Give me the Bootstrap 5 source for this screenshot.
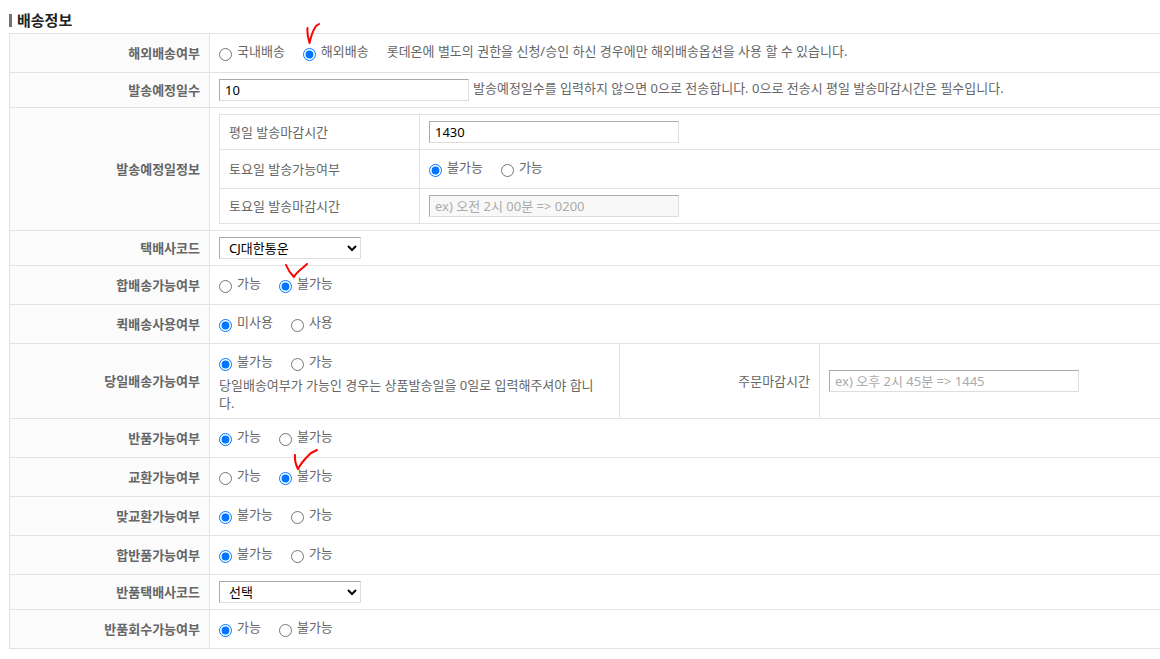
<!DOCTYPE html>
<html lang="ko">
<head>
<meta charset="utf-8">
<meta name="viewport" content="width=device-width, initial-scale=1">
<title>배송정보</title>
<link href="https://cdn.jsdelivr.net/npm/bootstrap@5.3.0/dist/css/bootstrap.min.css" rel="stylesheet">
<style>
  body { font: 13px/18px "Noto Sans", "Noto Sans CJK KR", sans-serif; color: #666; }
  .page { padding: 9px 0 9px 9px; }
  .section-title { font-size: 15px; line-height: 22px; color: #222; gap: 5px; margin-bottom: 2px; }
  .section-title::before { content: ""; width: 3px; height: 13px; background: #6c757d; }
  .form-grid { width: 100%; table-layout: fixed; border-collapse: collapse; }
  .form-grid th, .form-grid td { border: 1px solid #e1e1e6; padding: 6px 9px; vertical-align: middle; }
  .form-grid tr > :last-child { border-right: 0; }
  .form-grid .inner-cell { padding-right: 0; }
  .form-grid th { text-align: right; font-weight: 400; }
  .form-grid .row-head { background: #fbfbfb; font-weight: 700; color: #666; }
  .form-grid .inner-head { text-align: left; }
  .col-label { width: 200px; }
  .col-field { width: 410px; }
  .field, .picker { height: 22px; border: 1px solid #ddd; border-top-color: #aaa; border-left-color: #aaa; background: #fff; color: #000; border-radius: 0; }
  .field { width: 250px; padding: 0 5px; }
  .field::placeholder { color: #aaa; opacity: 1; }
  .field:disabled { background: #f8f8f8; }
  .picker { width: 142px; padding: 0 0 0 5px; }
  .choices { height: 26px; gap: 18px; }
  .choice { position: relative; gap: 5px; }
  .choice input { margin-top: 3px; }
  .choice label, .hint { padding-bottom: 4px; }
  .pen { position: absolute; fill: none; stroke: #f00; stroke-width: 2; stroke-linecap: round; stroke-linejoin: round; pointer-events: none; }
  .pen-a { left: 3px; top: -20px; }
  .pen-b { left: 5px; top: -12px; }
  .pen-c { left: 14px; top: -18px; }
</style>
</head>
<body>
<main class="page">
  <h1 class="section-title d-flex align-items-center fw-bold">배송정보</h1>
  <form>
  <table class="form-grid">
    <colgroup><col class="col-label"><col class="col-field"><col class="col-label"><col></colgroup>
    <tbody>
      <tr>
        <th class="row-head" scope="row">해외배송여부</th>
        <td colspan="3">
          <div class="choices d-flex align-items-center">
            <div class="choice d-flex align-items-center"><input type="radio" name="overseas" id="o1"><label for="o1">국내배송</label></div>
            <div class="choice d-flex align-items-center"><input type="radio" name="overseas" id="o2" checked><label for="o2">해외배송</label>
              <svg class="pen pen-a" width="16" height="24" aria-hidden="true"><path d="M1.500 6C1 11 2 16 3.500 21C5 14 8 7 10 4L13 2"/></svg>
            </div>
            <span class="hint">롯데온에 별도의 권한을 신청/승인 하신 경우에만 해외배송옵션을 사용 할 수 있습니다.</span>
          </div>
        </td>
      </tr>
      <tr>
        <th class="row-head" scope="row"><label for="days">발송예정일수</label></th>
        <td colspan="3">
          <div class="d-flex align-items-center gap-1">
            <input class="field" type="text" id="days" value="10">
            <span class="hint">발송예정일수를 입력하지 않으면 0으로 전송합니다. 0으로 전송시 평일 발송마감시간은 필수입니다.</span>
          </div>
        </td>
      </tr>
      <tr>
        <th class="row-head" scope="row">발송예정일정보</th>
        <td colspan="3" class="inner-cell">
          <table class="form-grid">
            <colgroup><col class="col-label"><col></colgroup>
            <tbody>
              <tr>
                <th class="inner-head" scope="row"><label for="weekday">평일 발송마감시간</label></th>
                <td><input class="field d-block" type="text" id="weekday" value="1430"></td>
              </tr>
              <tr>
                <th class="inner-head" scope="row">토요일 발송가능여부</th>
                <td>
                  <div class="choices d-flex align-items-center">
                    <div class="choice d-flex align-items-center"><input type="radio" name="sat" id="s1" checked><label for="s1">불가능</label></div>
                    <div class="choice d-flex align-items-center"><input type="radio" name="sat" id="s2"><label for="s2">가능</label></div>
                  </div>
                </td>
              </tr>
              <tr>
                <th class="inner-head" scope="row"><label for="satTime">토요일 발송마감시간</label></th>
                <td><input class="field d-block" type="text" id="satTime" placeholder="ex) 오전 2시 00분 =&gt; 0200" disabled></td>
              </tr>
            </tbody>
          </table>
        </td>
      </tr>
      <tr>
        <th class="row-head" scope="row"><label for="courier">택배사코드</label></th>
        <td colspan="3"><select class="picker d-block" id="courier"><option>CJ대한통운</option></select></td>
      </tr>
      <tr>
        <th class="row-head" scope="row">합배송가능여부</th>
        <td colspan="3">
          <div class="choices d-flex align-items-center">
            <div class="choice d-flex align-items-center"><input type="radio" name="bundle" id="b1"><label for="b1">가능</label></div>
            <div class="choice d-flex align-items-center"><input type="radio" name="bundle" id="b2" checked><label for="b2">불가능</label>
              <svg class="pen pen-b" width="26" height="18" aria-hidden="true"><path d="M2 3C4 8 7 12 10 15C13 9 18 7 23 2"/></svg>
            </div>
          </div>
        </td>
      </tr>
      <tr>
        <th class="row-head" scope="row">퀵배송사용여부</th>
        <td colspan="3">
          <div class="choices d-flex align-items-center">
            <div class="choice d-flex align-items-center"><input type="radio" name="quick" id="q1" checked><label for="q1">미사용</label></div>
            <div class="choice d-flex align-items-center"><input type="radio" name="quick" id="q2"><label for="q2">사용</label></div>
          </div>
        </td>
      </tr>
      <tr>
        <th class="row-head" scope="row">당일배송가능여부</th>
        <td>
          <div class="choices d-flex align-items-center">
            <div class="choice d-flex align-items-center"><input type="radio" name="today" id="t1" checked><label for="t1">불가능</label></div>
            <div class="choice d-flex align-items-center"><input type="radio" name="today" id="t2"><label for="t2">가능</label></div>
          </div>
          <div class="pe-2">당일배송여부가 가능인 경우는 상품발송일을 0일로 입력해주셔야 합니다.</div>
        </td>
        <th scope="row"><label for="cutoff">주문마감시간</label></th>
        <td><input class="field d-block" type="text" id="cutoff" placeholder="ex) 오후 2시 45분 =&gt; 1445"></td>
      </tr>
      <tr>
        <th class="row-head" scope="row">반품가능여부</th>
        <td colspan="3">
          <div class="choices d-flex align-items-center">
            <div class="choice d-flex align-items-center"><input type="radio" name="ret" id="r1" checked><label for="r1">가능</label></div>
            <div class="choice d-flex align-items-center"><input type="radio" name="ret" id="r2"><label for="r2">불가능</label></div>
          </div>
        </td>
      </tr>
      <tr>
        <th class="row-head" scope="row">교환가능여부</th>
        <td colspan="3">
          <div class="choices d-flex align-items-center">
            <div class="choice d-flex align-items-center"><input type="radio" name="exch" id="e1"><label for="e1">가능</label></div>
            <div class="choice d-flex align-items-center"><input type="radio" name="exch" id="e2" checked><label for="e2">불가능</label>
              <svg class="pen pen-c" width="28" height="24" aria-hidden="true"><path d="M2 7C1.500 12 3 17 5 21C9 13 14 9 18 5L24 2"/></svg>
            </div>
          </div>
        </td>
      </tr>
      <tr>
        <th class="row-head" scope="row">맞교환가능여부</th>
        <td colspan="3">
          <div class="choices d-flex align-items-center">
            <div class="choice d-flex align-items-center"><input type="radio" name="swap" id="w1" checked><label for="w1">불가능</label></div>
            <div class="choice d-flex align-items-center"><input type="radio" name="swap" id="w2"><label for="w2">가능</label></div>
          </div>
        </td>
      </tr>
      <tr>
        <th class="row-head" scope="row">합반품가능여부</th>
        <td colspan="3">
          <div class="choices d-flex align-items-center">
            <div class="choice d-flex align-items-center"><input type="radio" name="multi" id="m1" checked><label for="m1">불가능</label></div>
            <div class="choice d-flex align-items-center"><input type="radio" name="multi" id="m2"><label for="m2">가능</label></div>
          </div>
        </td>
      </tr>
      <tr>
        <th class="row-head" scope="row"><label for="retCourier">반품택배사코드</label></th>
        <td colspan="3"><select class="picker d-block" id="retCourier"><option>선택</option></select></td>
      </tr>
      <tr>
        <th class="row-head" scope="row">반품회수가능여부</th>
        <td colspan="3">
          <div class="choices d-flex align-items-center">
            <div class="choice d-flex align-items-center"><input type="radio" name="pickup" id="p1" checked><label for="p1">가능</label></div>
            <div class="choice d-flex align-items-center"><input type="radio" name="pickup" id="p2"><label for="p2">불가능</label></div>
          </div>
        </td>
      </tr>
    </tbody>
  </table>
  </form>
</main>
<script src="https://cdn.jsdelivr.net/npm/bootstrap@5.3.0/dist/js/bootstrap.bundle.min.js"></script>
</body>
</html>
